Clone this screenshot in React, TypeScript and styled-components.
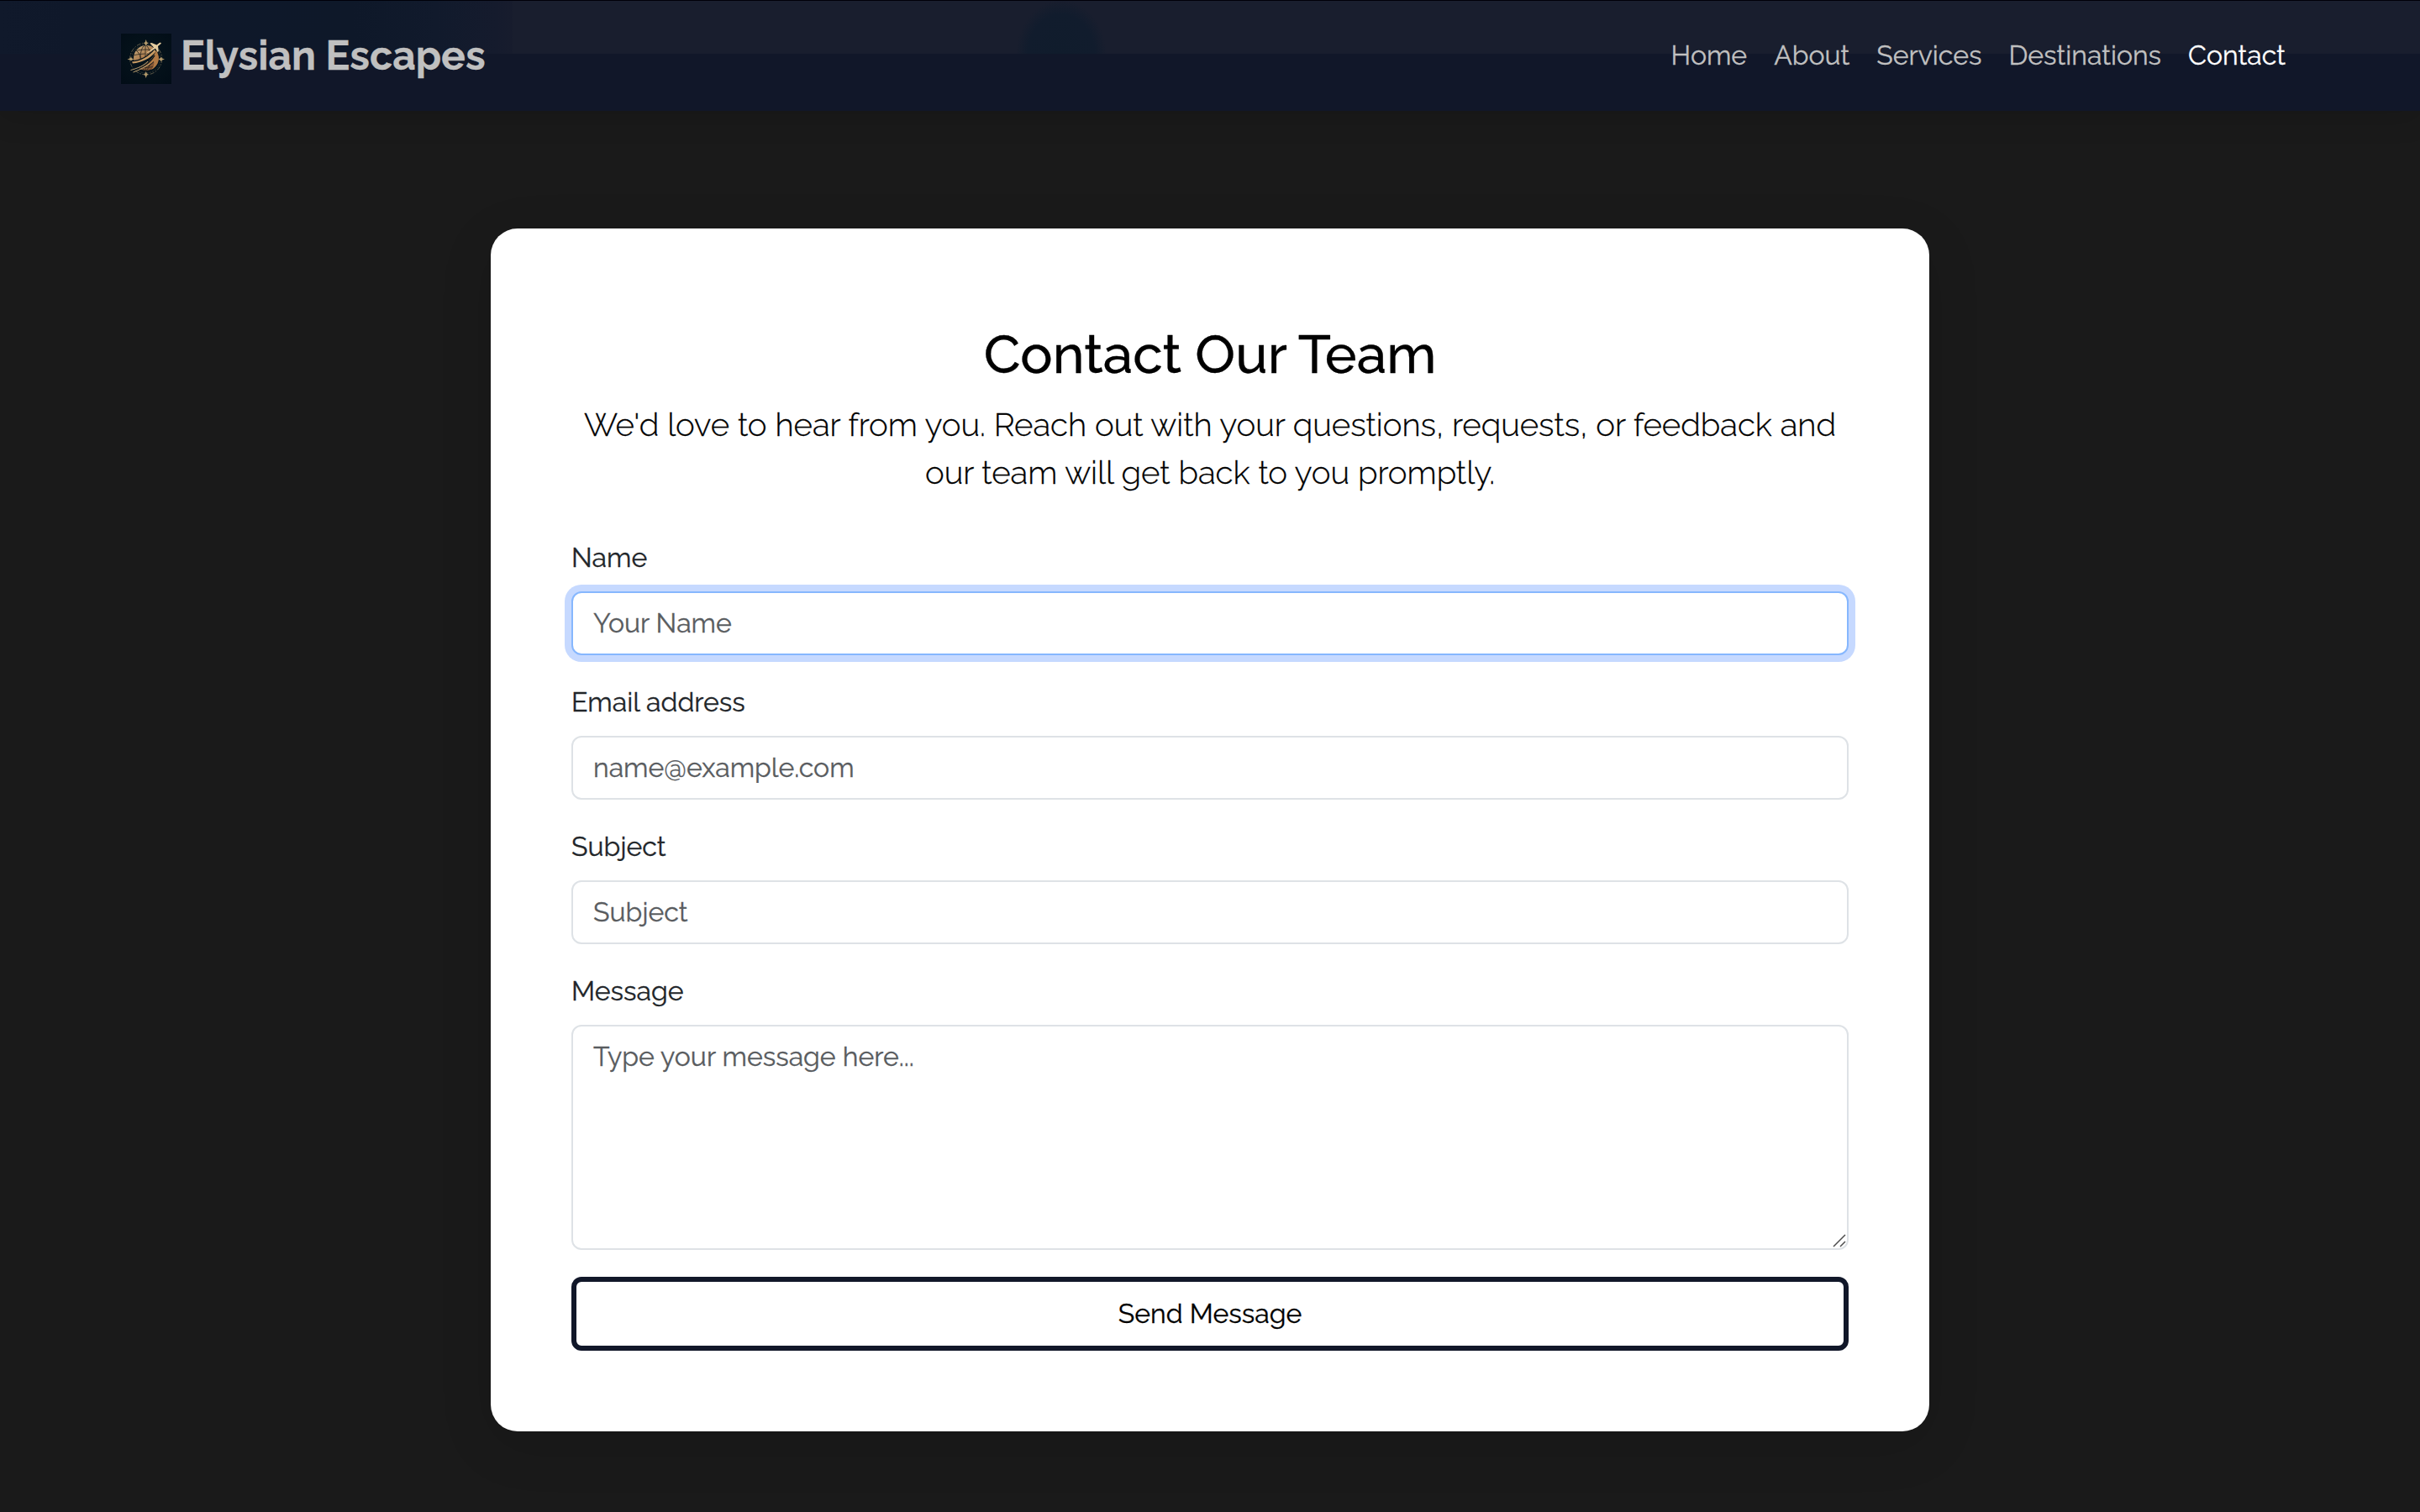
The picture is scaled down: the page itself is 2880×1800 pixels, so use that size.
import React from "react";
import styled, { createGlobalStyle, css } from "styled-components";

const GlobalStyle = createGlobalStyle`
  *, *::before, *::after { box-sizing: border-box; }
  html, body { margin: 0; padding: 0; background: #1a1a1a; }
  body {
    font-family: Raleway, Lato, "Open Sans", sans-serif;
    font-size: 32px;
    line-height: 1.5;
    color: #212529;
    overflow: hidden;
    -webkit-font-smoothing: antialiased;
    -webkit-text-stroke-width: 0.3px;
  }
`;

const Page = styled.div`
  min-height: 1800px;
  display: flex;
  flex-direction: column;
`;

const Navbar = styled.header`
  height: 132px;
  padding: 0 144px 1px;
  display: flex;
  align-items: center;
  justify-content: space-between;
  background:
    linear-gradient(#000009, #000009) 0 0 / 100% 1px no-repeat,
    radial-gradient(54px 66px at 1263px 66px, #101c2c 0, #111c2d 74%, transparent 100%) 0 0 / 100% 64px no-repeat,
    linear-gradient(90deg, #10192b 0, #0f182a 80px, #0e182a 200px, #0e1829 420px, #111a2c 520px, #151b2d 590px, #171c2d 609px, transparent 610px) 0 0 / 100% 64px no-repeat,
    linear-gradient(#191e2e, #191e2e) 0 0 / 100% 64px no-repeat,
    #111729;
  box-shadow: 0 8px 32px rgba(0, 0, 0, 0.13);
`;

const Brand = styled.a`
  display: flex;
  align-items: center;
  gap: 11px;
  font-size: 48px;
  font-weight: 700;
  color: #c0c0c0;
  text-decoration: none;
  white-space: nowrap;
`;

const Logo = styled.svg`
  width: 60px;
  height: 60px;
  margin-top: 9px;
  flex: none;
`;

const Nav = styled.nav`
  display: flex;
  gap: 32px;
  padding-right: 16px;
`;

const NavLink = styled.a<{ $active?: boolean }>`
  color: ${(p) => (p.$active ? "#fff" : "#c0c0c0")};
  text-decoration: none;
`;

const Main = styled.main`
  padding-top: 140px;
  display: flex;
  justify-content: center;
`;

const Card = styled.section`
  width: 1712px;
  padding: 112px 96px 96px;
  border-radius: 32px;
  background: #fff;
  box-shadow: 0 16px 64px rgba(0, 0, 0, 0.12);
`;

const Title = styled.h1`
  margin: 0 0 16px;
  font-size: 64px;
  font-weight: 500;
  line-height: 1.2;
  text-align: center;
  color: #000;
`;

const Lead = styled.p`
  margin: 0 0 48px;
  font-size: 38.4px;
  font-weight: 300;
  text-align: center;
  color: #000;
`;

const Form = styled.form`
  display: flex;
  flex-direction: column;
  gap: 32px;
`;

const Field = styled.div`
  position: relative;
  display: flex;
  flex-direction: column;
  gap: 16px;
`;

const Label = styled.label`
  color: #212529;
`;

const control = css<{ $focused?: boolean }>`
  display: block;
  width: 100%;
  margin: 0;
  padding: 12px 24px;
  font: inherit;
  color: #212529;
  background: #fff;
  border: 2px solid ${(p) => (p.$focused ? "#86b7fe" : "#dee2e6")};
  border-radius: 12px;
  outline: 0;
  box-shadow: ${(p) => (p.$focused ? "0 0 0 8px #c6d9ff" : "none")};
  &::placeholder { color: #595c5f; opacity: 1; }
`;

const Input = styled.input<{ $focused?: boolean }>`
  ${control}
  height: 76px;
  padding-bottom: 14px;
`;

const TextArea = styled.textarea<{ $focused?: boolean }>`
  ${control}
  height: 268px;
  resize: none;
`;

const ResizeGrip = styled.svg`
  position: absolute;
  right: 3px;
  bottom: 3px;
  width: 16px;
  height: 16px;
  pointer-events: none;
`;

const Submit = styled.button`
  height: 88px;
  padding: 0 24px;
  font: inherit;
  color: #000;
  background: #fff;
  border: 6px solid #111729;
  border-radius: 12px;
`;

const GlobeLogo = () => (
  <Logo viewBox="0 0 60 60" aria-hidden="true">
    <defs>
      <radialGradient id="plate" cx="50%" cy="45%" r="70%">
        <stop offset="0" stopColor="#06151d" />
        <stop offset="1" stopColor="#020d17" />
      </radialGradient>
      <linearGradient id="gold" x1="0" y1="0" x2="0.7" y2="1">
        <stop offset="0" stopColor="#c9b084" />
        <stop offset="0.5" stopColor="#ab7b4c" />
        <stop offset="1" stopColor="#7a4a2c" />
      </linearGradient>
      <clipPath id="globe">
        <circle cx="30" cy="29" r="15" />
      </clipPath>
    </defs>
    <rect width="60" height="60" fill="url(#plate)" />
    <g fill="none" stroke="#5f5a49">
      <circle cx="29.7" cy="30" r="19" strokeWidth="1" strokeDasharray="5 1.6 1.5 1.6" />
      <circle cx="29.7" cy="30" r="17" strokeWidth="0.6" strokeDasharray="2 1.4" opacity="0.8" />
    </g>
    <g fill="#b39a6c">
      <path d="M29.7 7l1 3 1.6 1.4-1.6 1.3-1 2.3-1-2.3-1.6-1.3 1.6-1.4z" />
      <path d="M29.7 53l1-3 1.6-1.4-1.6-1.3-1-2.3-1 2.3-1.6 1.3 1.6 1.4z" />
      <path d="M7.500 30.500l3-1 1.400-1.600 1.300 1.600 2.300 1-2.300 1-1.300 1.600-1.400-1.600z" />
      <path d="M52 30.500l-3-1-1.400-1.600-1.300 1.600-2.300 1 2.300 1 1.300 1.600 1.400-1.600z" />
    </g>
    <circle cx="30" cy="29" r="15" fill="url(#gold)" />
    <g clipPath="url(#globe)" fill="none" stroke="#2a2620" strokeWidth="0.8">
      <ellipse cx="29" cy="29" rx="6" ry="15" />
      <path d="M29 13v32M15 21q14-4 29 0M14 26q15-4 31 0M16 39q14 3 28 0" />
      <path d="M16 18q6 4 8 12" />
    </g>
    <path d="M11 32C20 33 33 27 41 16L45 25C40 38 27 43 14 41Z" fill="#06131b" />
    <path d="M13 33.500C24 33 33 27 40 19L41.500 21.500C34 30 25 34.500 14 35.500Z" fill="#c79a63" />
    <path d="M20 41.500C28 38 37 32 42 20C48 30 43 40 36 43C39 39 40 36 39 33C34 38 28 41 20 41.500Z" fill="#b27a45" />
    <path d="M12 44C23 42 34 36 40 26" fill="none" stroke="#06131b" strokeWidth="1.400" />
    <path d="M11.500 43.500C21 41 27 38 32 33M14.500 46C22 43 29 40 34 36" fill="none" stroke="#c8a876" strokeWidth="0.900" />
    <path d="M28 25L39 16.500L34.500 11.500L36.500 11L42.500 13.500L46 10.800Q48.500 10.300 47.600 12L44 15L44.800 21L43.500 22L41 17.800Z" fill="#e6cd9f" />
  </Logo>
);

const links = ["Home", "About", "Services", "Destinations", "Contact"];

const fields = [
  { id: "name", label: "Name", placeholder: "Your Name", focused: true },
  { id: "email", label: "Email address", placeholder: "name@example.com" },
  { id: "subject", label: "Subject", placeholder: "Subject" },
];

export default function App() {
  return (
    <Page>
      <GlobalStyle />
      <Navbar>
        <Brand>
          <GlobeLogo />
          Elysian Escapes
        </Brand>
        <Nav>
          {links.map((link) => (
            <NavLink key={link} $active={link === "Contact"}>
              {link}
            </NavLink>
          ))}
        </Nav>
      </Navbar>
      <Main>
        <Card>
          <Title>Contact Our Team</Title>
          <Lead>
            We'd love to hear from you. Reach out with your questions, requests, or feedback and our team will get back to you
            promptly.
          </Lead>
          <Form>
            {fields.map((f) => (
              <Field key={f.id}>
                <Label htmlFor={f.id}>{f.label}</Label>
                <Input id={f.id} placeholder={f.placeholder} $focused={f.focused} />
              </Field>
            ))}
            <Field>
              <Label htmlFor="message">Message</Label>
              <TextArea id="message" placeholder="Type your message here..." />
              <ResizeGrip viewBox="0 0 16 16" aria-hidden="true">
                <path d="M1 15L15 1M9 15L15 9" fill="none" stroke="#4d4d4d" strokeWidth="1.500" />
              </ResizeGrip>
            </Field>
            <Submit type="button">Send Message</Submit>
          </Form>
        </Card>
      </Main>
    </Page>
  );
}
